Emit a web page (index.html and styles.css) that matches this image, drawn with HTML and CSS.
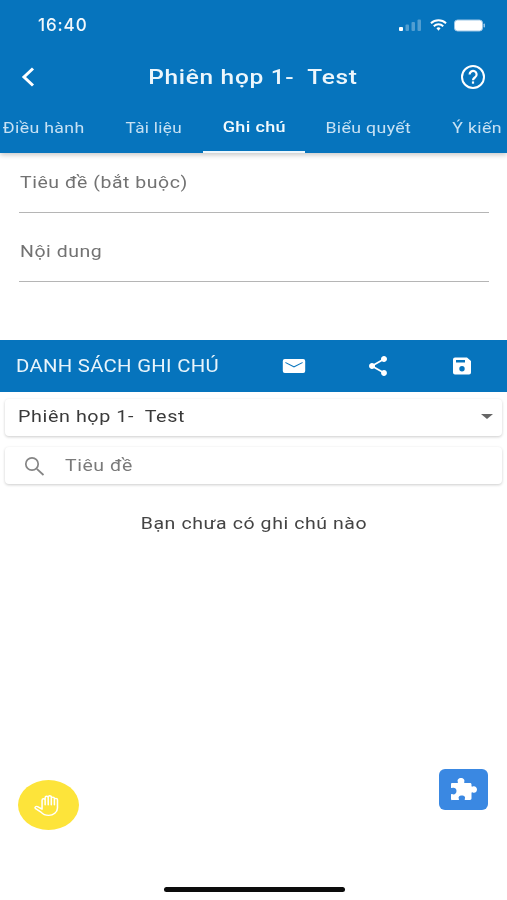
FILE: index.html
```html
<!DOCTYPE html>
<html lang="vi">
<head>
<meta charset="utf-8">
<title>Phiên họp 1- Test</title>
<link rel="stylesheet" href="styles.css">
</head>
<body>
<div class="app">
  <header class="top">
    <div class="status">
      <span class="time">16:40</span>
      <span class="status-icons">
        <svg width="24" height="12" viewBox="0 0 24 12"><rect x="0" y="8" width="4" height="4" rx="1" fill="#fff"/><rect x="6.500" y="5.500" width="3.500" height="6.500" rx="1" fill="#fff" opacity=".3"/><rect x="12.500" y="3" width="3.500" height="9" rx="1" fill="#fff" opacity=".3"/><rect x="18.500" y="0.500" width="3.500" height="11.500" rx="1" fill="#fff" opacity=".3"/></svg>
        <svg width="17" height="12" viewBox="0 0 18 12"><path d="M1 4.200a11.500 11.500 0 0 1 16 0" fill="none" stroke="#fff" stroke-width="2"/><path d="M4 7.300a7 7 0 0 1 10 0" fill="none" stroke="#fff" stroke-width="2"/><path d="M6.800 9.500a3.200 3.200 0 0 1 4.400 0L9 12z" fill="#fff"/></svg>
        <svg width="32" height="13" viewBox="0 0 32 13"><rect x="0.500" y="1" width="28" height="11" rx="3" fill="#fff" stroke="#9cc6e6"/><rect x="29.500" y="4.500" width="1.500" height="4" rx=".7" fill="#9cc6e6"/></svg>
      </span>
    </div>
    <div class="nav">
      <svg class="nav-icon" width="20" height="24" viewBox="0 0 20 24"><path d="M15 3.500 6 12l9 8.500" fill="none" stroke="#fff" stroke-width="3"/></svg>
      <h1 class="title">Phiên họp 1-&nbsp; Test</h1>
      <svg class="nav-icon" width="28" height="28" viewBox="0 0 28 28"><circle cx="14" cy="14" r="11" fill="none" stroke="#fff" stroke-width="2"/><path d="M10.600 11.500a3.500 3.500 0 1 1 5.600 2.700c-1.300 1-2.200 1.500-2.200 3" fill="none" stroke="#fff" stroke-width="2.200"/><rect x="12.900" y="18.400" width="2.200" height="2.300" fill="#fff"/></svg>
    </div>
    <nav class="tabs">
      <span class="tab t1"><span class="wide">Điều hành</span></span>
      <span class="tab t2"><span class="wide">Tài liệu</span></span>
      <span class="tab t3 active"><span class="wide">Ghi chú</span></span>
      <span class="tab t4"><span class="wide">Biểu quyết</span></span>
      <span class="tab t5"><span class="wide">Ý kiến</span></span>
    </nav>
  </header>

  <section class="form">
    <div class="field f1"><span class="wide-left">Tiêu đề (bắt buộc)</span></div>
    <div class="field f2"><span class="wide-left">Nội dung</span></div>
  </section>

  <section class="list-bar">
    <span class="list-title wide-left">DANH SÁCH GHI CHÚ</span>
    <span class="list-actions">
      <svg width="24" height="24" viewBox="0 0 24 24"><path fill="#fff" fill-rule="evenodd" d="M2.800 5h18.400a2 2 0 0 1 2 2v10a2 2 0 0 1-2 2H2.800a2 2 0 0 1-2-2V7a2 2 0 0 1 2-2zm.6 3v1l8.600 4.500L20.600 9V8L12 12.300z"/></svg>
      <svg width="24" height="24" viewBox="0 0 24 24"><path fill="#fff" d="M18 16.080c-.76 0-1.440.3-1.960.77L8.910 12.700c.05-.23.09-.46.09-.7s-.04-.47-.09-.7l7.050-4.110c.54.5 1.250.81 2.040.81 1.660 0 3-1.340 3-3s-1.340-3-3-3-3 1.340-3 3c0 .24.040.47.090.7L8.040 9.810C7.500 9.310 6.790 9 6 9c-1.660 0-3 1.340-3 3s1.340 3 3 3c.79 0 1.500-.31 2.040-.81l7.120 4.160c-.05.21-.08.43-.08.650 0 1.610 1.310 2.920 2.920 2.920s2.920-1.310 2.920-2.920-1.310-2.920-2.920-2.920z"/></svg>
      <svg width="24" height="24" viewBox="0 0 24 24"><path fill="#fff" d="M17 3.500H5a2 2 0 0 0-2 2v13a2 2 0 0 0 2 2h14a2 2 0 0 0 2-2V7l-4-3.500zm-5 14a2.700 2.700 0 1 1 0-5.400 2.700 2.700 0 0 1 0 5.400zm3-9H6V6h9v2.500z"/></svg>
    </span>
  </section>

  <div class="card select">
    <span class="wide-left">Phiên họp 1-&nbsp; Test</span>
    <span class="caret"></span>
  </div>
  <div class="card search">
    <svg width="24" height="24" viewBox="0 0 24 24"><circle cx="10" cy="10" r="6.200" fill="none" stroke="#858585" stroke-width="1.700"/><path d="m14.800 14.800 6.700 6.200" fill="none" stroke="#858585" stroke-width="1.800"/></svg>
    <span class="wide-left">Tiêu đề</span>
  </div>
  <p class="empty"><span class="wide">Bạn chưa có ghi chú nào</span></p>

  <div class="fab hand">
    <svg class="hand-icon" width="29" height="23" viewBox="0 0 32 28" preserveAspectRatio="none"><path d="M10 13V7.500a1.700 1.700 0 0 1 3.400 0V4.500a1.700 1.700 0 0 1 3.400 0v-.7a1.700 1.700 0 0 1 3.400 0v1.700a1.700 1.700 0 0 1 3.400 0v1.500a1.700 1.700 0 0 1 3.400 0V17c0 5-4.600 9-9.700 9-4 0-6.500-1.500-8.500-4L2.500 17.500c-1-1.500 1-3 2.500-2.200l5 3.200zM13.400 7.500V13M16.800 4.500V13M20.200 4V13M23.600 5.500V13" fill="none" stroke="#fff" stroke-width="1.700" stroke-linecap="round" stroke-linejoin="round"/></svg>
  </div>
  <div class="fab puzzle">
    <svg width="27" height="23" viewBox="0 0 27 23"><path fill="#fff" fill-rule="evenodd" d="M2 5h5.500c.5 0 .6-.6.300-1.200C7 2 8.500 0 11 0s4 2 3.300 3.800c-.3.600-.2 1.200.3 1.200H20c1 0 1.500.7 1.500 1.700V8c0 .6.600.8 1.200.5C24.700 7.600 27 9 27 11.500s-2.300 4-4.300 3c-.6-.3-1.200-.1-1.200.5v5.300c0 1-.6 1.700-1.500 1.700h-4.800c-.6 0-.7-.6-.4-1.200.9-1.600-.5-3.300-3-3.300s-3.800 1.700-2.900 3.300c.3.600.2 1.200-.4 1.200H2.500C1.600 22.500 1 21.800 1 20.800V16.500c0-.6.500-.7 1.100-.4C4 17 6.500 16 6.500 13S4 9.200 2.100 9.900c-.6.300-1.100.2-1.100-.4V6.700C1 5.700 1.200 5 2 5z"/></svg>
  </div>
  <div class="home-bar"></div>
</div>
</body>
</html>
```

FILE: styles.css
```css
* { box-sizing: border-box; }
html, body { margin: 0; padding: 0; background: #fff; }
body { font-family: Roboto, "Noto Sans", "Liberation Sans", sans-serif; }
.app { position: relative; width: 507px; height: 900px; overflow: hidden; background: #fff; filter: blur(.4px); }

.wide { display: inline-block; transform: scaleX(1.18); white-space: nowrap; }
.wide-left { display: inline-block; transform: scaleX(1.18); transform-origin: left center; white-space: nowrap; }

.top { height: 153px; background: #0674bd; color: #fff; box-shadow: 0 2px 5px rgba(0,0,0,.22); position: relative; }
.status { height: 50px; display: flex; justify-content: space-between; align-items: center; padding: 0 21px 0 38px; }
.time { font: 500 17px/1 Inter, Roboto, sans-serif; letter-spacing: .9px; color: #f2f8fc; }
.status-icons { display: flex; align-items: center; gap: 7px; }

.nav { height: 54px; display: flex; align-items: center; justify-content: space-between; padding: 0 20px 0 18px; }
.nav-icon { flex: none; }
.title { margin: 0 0 0 9px; font: 500 21px/1 Roboto, sans-serif; letter-spacing: .6px; color: #ecf6fc; transform: scaleX(1.165); }

.tabs { height: 49px; display: flex; position: relative; font-size: 15px; letter-spacing: .3px; color: #c7e1f3; }
.tab { display: flex; align-items: center; justify-content: center; height: 48px; white-space: nowrap; }
.t1 { width: 88px; }
.t2 { width: 115px; padding-left: 17px; }
.t2 .wide { transform: scaleX(1.14); }
.t3 { width: 102px; }
.t3 .wide { transform: scaleX(1.2); }
.t4 { width: 127px; }
.t5 { width: 75px; padding-left: 15px; }
.active { color: #f4fafd; font-weight: 500; border-bottom: 2px solid #eef7fc; height: 49px; padding-bottom: 1px; }

.form { height: 187px; padding: 0 18px 0 20px; }
.field { height: 60px; padding-top: 20px; border-bottom: 1.500px solid #b5b5b5; font-size: 16.500px; line-height: 20px; letter-spacing: .45px; color: #727272; }
.f1 { margin-bottom: 9px; }
.f1, .f2 { margin-left: -1px; padding-left: 1px; }

.list-bar { height: 52px; background: #0674bd; display: flex; align-items: center; justify-content: space-between; padding: 0 33px 0 16px; color: #e8f4fb; }
.list-title { font-size: 17.500px; letter-spacing: .25px; transform: scaleX(1.16); }
.list-actions { display: flex; gap: 60px; }

.card { margin: 0 5px; background: #fff; border-radius: 4px; box-shadow: 0 1px 3px rgba(0,0,0,.2); display: flex; align-items: center; }
.select { height: 37px; margin-top: 7px; padding: 0 9px 3px 13px; justify-content: space-between; font-size: 16.500px; letter-spacing: .5px; color: #3a3a3a; }
.select .wide-left { transform: scaleX(1.195); }
.caret { width: 0; height: 0; border-left: 6px solid transparent; border-right: 6px solid transparent; border-top: 5px solid #666; }
.search { height: 37px; margin-top: 11px; padding: 0 0 0 17px; gap: 19px; font-size: 16.500px; letter-spacing: .45px; color: #7a7a7a; }
.empty { margin: 30px 0 0; text-align: center; font-size: 16.500px; line-height: 20px; letter-spacing: .5px; color: #444; }

.fab { position: absolute; display: flex; align-items: center; justify-content: center; }
.hand { left: 18px; top: 780px; width: 61px; height: 50px; border-radius: 50%; background: #fde43a; }
.hand-icon { margin-right: 3px; }
.puzzle { left: 439px; top: 769px; width: 49px; height: 41px; border-radius: 6px; background: #3a88e2; }
.home-bar { position: absolute; left: 164px; top: 887px; width: 181px; height: 5px; border-radius: 3px; background: #0c0c0c; }
```
